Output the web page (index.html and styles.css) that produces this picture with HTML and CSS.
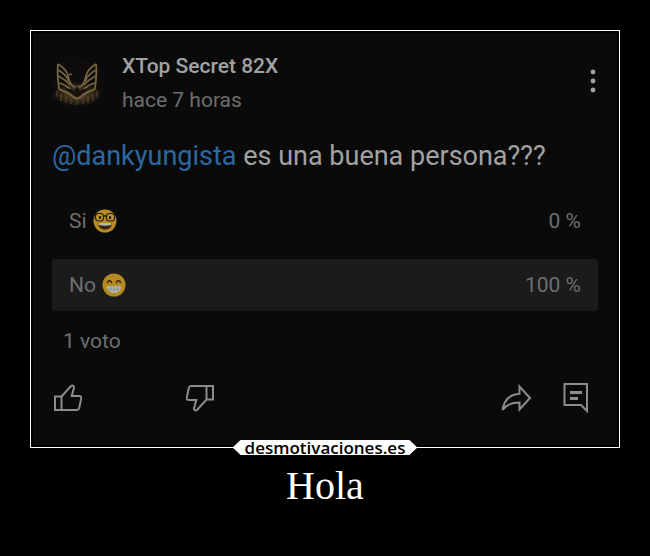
FILE: index.html
```html
<!DOCTYPE html>
<html lang="es">
<head>
    <meta charset="UTF-8">
    <meta name="viewport" content="width=device-width, initial-scale=1.0">
    <title>Hola</title>
    <link rel="stylesheet" href="styles.css">
</head>
<body>
    <main class="poster">
        <div class="frame">
            <article class="post">
                <header class="post-header">
                    <svg class="avatar" viewBox="0 0 50 50" aria-hidden="true">
                        <defs>
                            <radialGradient id="glow" cx="50%" cy="50%" r="50%">
                                <stop offset="0" stop-color="#54452b"/>
                                <stop offset="0.5" stop-color="#3a2f1e"/>
                                <stop offset="1" stop-color="#0e0c0a"/>
                            </radialGradient>
                        </defs>
                        <circle cx="25" cy="25" r="25" fill="#0e0c0a"/>
                        <ellipse cx="25" cy="36" rx="25" ry="12" fill="url(#glow)"/>
                        <g fill="none" stroke="#75643f" stroke-width="1.800" stroke-linejoin="round">
                            <path d="M6 6c-1 8 0 17 1 25M44 6c1 8 0 17-1 25"/>
                            <path d="M6 6c5 3 9 7 10 12s2 8 5 10M44 6c-5 3-9 7-10 12s-2 8-5 10"/>
                            <path d="M6 12c4 2 8 5 11 11M6 18c4 2 9 5 12 9M7 25c4 1 8 3 11 6M44 12c-4 2-8 5-11 11M44 18c-4 2-9 5-12 9M43 25c-4 1-8 3-11 6"/>
                            <path d="M7 31c5 3 10 3 14 8l4 2 4-2c4-5 9-5 14-8"/>
                            <path d="M17 17l3-1M19 27l3 2 2-1M31 27l-3 2-2-1" stroke-width="1.500"/>
                        </g>
                        <path d="M13 30c4 1 7 1 9 3l2-3h2l2 3c2-2 5-2 9-3-2 4-6 4-8 7l-4 2-4-2c-2-3-6-3-8-7z" fill="#15110b"/>
                        <path d="M5 33v6M9 36v7M14 38v7M19 41v5M25 43v4M31 41v5M36 38v7M41 36v7M45 33v6" stroke="#5c4c2f" stroke-width="1"/>
                    </svg>
                    <div class="author">
                        <div class="author-name">XTop Secret 82X</div>
                        <div class="post-time">hace 7 horas</div>
                    </div>
                    <button class="icon-button menu" aria-label="Menú">
                        <svg width="6" height="24" viewBox="0 0 6 24">
                            <circle cx="3" cy="3" r="2.400"/>
                            <circle cx="3" cy="12" r="2.400"/>
                            <circle cx="3" cy="21" r="2.400"/>
                        </svg>
                    </button>
                </header>
                <p class="message"><a href="#">@dankyungista</a> es una buena persona???</p>
                <div class="poll">
                    <button class="option">
                        <span>Si</span>
                        <svg class="emoji" viewBox="0 0 24 24" aria-hidden="true">
                            <circle cx="12" cy="12" r="11.500" fill="#b58a20"/>
                            <path d="M5 14h14c0 4.500-3.500 6.500-7 6.500S5 18.500 5 14z" fill="#39240f"/>
                            <path d="M5.500 14h13v2c-4 1-9 1-13 0z" fill="#b5b5ac"/>
                            <g fill="#c1962a" stroke="#211b12" stroke-width="1.200">
                                <rect x="2.500" y="4.500" width="8" height="7.500" rx="3.200"/>
                                <rect x="13.500" y="4.500" width="8" height="7.500" rx="3.200"/>
                                <path d="M10.500 7.500c1-1 2-1 3 0M.5 6h2.500M23.500 6H21" fill="none"/>
                            </g>
                            <ellipse cx="7" cy="8.500" rx="1.200" ry="1.700" fill="#211b12"/>
                            <ellipse cx="17" cy="8.500" rx="1.200" ry="1.700" fill="#211b12"/>
                        </svg>
                        <span class="percent">0 %</span>
                    </button>
                    <button class="option selected">
                        <span>No</span>
                        <svg class="emoji" viewBox="0 0 24 24" aria-hidden="true">
                            <circle cx="12" cy="12" r="11.500" fill="#b58a20"/>
                            <path d="M5.500 9.500c.8-2.400 3.200-2.400 4 0M14.500 9.500c.8-2.400 3.200-2.400 4 0" fill="none" stroke="#39240f" stroke-width="1.500" stroke-linecap="round"/>
                            <path d="M6 13h12c1 0 1.500.8 1.200 2-1 3.500-3.500 5-7.200 5s-6.200-1.500-7.200-5C4.500 13.800 5 13 6 13z" fill="#b5b5ac"/>
                            <path d="M5 16.300h14M8.500 13v6.500M12 13v7M15.500 13v6.500" stroke="#8b8b86" stroke-width=".7"/>
                        </svg>
                        <span class="percent">100 %</span>
                    </button>
                </div>
                <p class="votes">1 voto</p>
                <footer class="actions">
                    <button class="icon-button" aria-label="Me gusta">
                        <svg width="28" height="28" viewBox="0 0 28 28">
                            <path d="M1 12.500h6.500V26H1zM7.500 12.500L17 2c1.500-1.200 3.400 0 2.900 2l-2.200 8h7.500c1.500 0 2.300 1 2 2.400l-2 9.600c-.3 1.300-1 2-2.200 2H7.500"/>
                        </svg>
                    </button>
                    <button class="icon-button dislike" aria-label="No me gusta">
                        <svg width="28" height="28" viewBox="0 0 28 28">
                            <path d="M27 15.500h-6.500V2H27zM20.500 15.500L11 26c-1.500 1.200-3.400 0-2.900-2l2.200-8H2.800c-1.500 0-2.300-1-2-2.400l2-9.600c.3-1.300 1-2 2.200-2h15.500"/>
                        </svg>
                    </button>
                    <button class="icon-button share" aria-label="Compartir">
                        <svg width="30" height="28" viewBox="0 0 30 28">
                            <path d="M18.500 2.500v7.200C9 10.500 3 16 1.500 26c4-5.500 9-7.500 17-7.500v7L29 14z"/>
                        </svg>
                    </button>
                    <button class="icon-button" aria-label="Comentar">
                        <svg width="26" height="30" viewBox="0 0 26 30">
                            <path d="M1.500 1h22.500v27L18 22H1.500z"/>
                            <path d="M7 9.500h12M7 15.500h8" stroke-width="3"/>
                        </svg>
                    </button>
                </footer>
            </article>
            <a class="brand" href="#">desmotivaciones.es</a>
        </div>
        <h1 class="title">Hola</h1>
    </main>
</body>
</html>
```

FILE: styles.css
```css
body {
    margin: 0;
    background-color: #000;
    font-family: Roboto, "Liberation Sans", sans-serif;
}
p, h1 {
    margin: 0;
}
a {
    text-decoration: none;
}
button {
    padding: 0;
    border: none;
    background: none;
    font: inherit;
    color: inherit;
    cursor: pointer;
}
svg {
    display: block;
    flex-shrink: 0;
}
.poster {
    padding: 30px;
}
.frame {
    position: relative;
    padding: 2px;
    border: 1px solid #fff;
}
.post {
    padding: 16px 19px 32px;
    background-color: #0a0a0a;
    color: #6e6e6e;
    font-size: 21px;
}
.post-header {
    display: flex;
    align-items: center;
}
.avatar {
    width: 50px;
    height: 50px;
}
.author {
    flex: 1;
    margin-left: 20px;
    line-height: 34px;
}
.author-name {
    color: #a2a2a2;
    font-weight: 500;
}
.icon-button svg {
    fill: none;
    stroke: #8c8c8c;
    stroke-width: 2px;
}
.icon-button.menu svg {
    fill: #a2a2a2;
    stroke: none;
}
.menu {
    margin: 0 2px 4px 0;
}
.message {
    margin-top: 21px;
    color: #a2a2a2;
    font-size: 27px;
    line-height: 36px;
}
.message a {
    color: #2d68a0;
}
.poll {
    display: flex;
    flex-direction: column;
    gap: 12px;
    margin-top: 21px;
}
.option {
    display: flex;
    align-items: center;
    gap: 6px;
    height: 52px;
    padding: 0 17px;
    border-radius: 3px;
}
.option.selected {
    background-color: #1b1b1b;
}
.emoji {
    width: 24px;
    height: 24px;
}
.percent {
    margin-left: auto;
}
.votes {
    margin: 16px 11px 0;
    line-height: 28px;
}
.actions {
    display: flex;
    align-items: center;
    margin: 28px 9px 0 2px;
}
.dislike {
    margin-left: 104px;
}
.share {
    margin-left: auto;
    margin-right: 32px;
}
.brand {
    position: absolute;
    left: 50%;
    bottom: -8px;
    transform: translateX(-50%);
    padding: 0 12px;
    background-color: #fff;
    clip-path: polygon(8px 0, calc(100% - 8px) 0, 100% 50%, calc(100% - 8px) 100%, 8px 100%, 0 50%);
    color: #000;
    font-family: "Open Sans", "DejaVu Sans", sans-serif;
    font-size: 17px;
    font-weight: 600;
    line-height: 15px;
}
.title {
    margin-top: 15px;
    color: #fff;
    font-family: "Liberation Serif", serif;
    font-size: 40px;
    font-weight: 400;
    line-height: 46px;
    text-align: center;
}
```
